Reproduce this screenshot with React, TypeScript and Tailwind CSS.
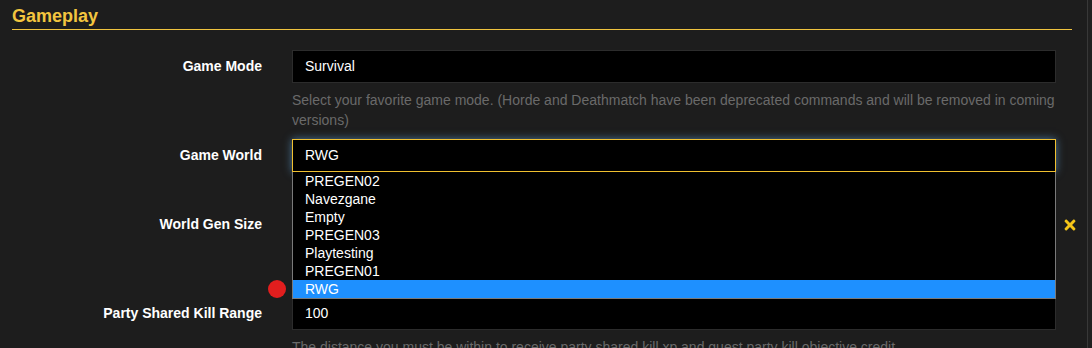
import React from "react";
import { FaTimes } from "react-icons/fa";

const options = ["PREGEN02", "Navezgane", "Empty", "PREGEN03", "Playtesting", "PREGEN01", "RWG"];

function Row({
  label,
  value,
  help,
  focused,
  icon,
  children,
}: {
  label: string;
  value: string;
  help: React.ReactNode;
  focused?: boolean;
  icon?: boolean;
  children?: React.ReactNode;
}) {
  return (
    <div className="flex items-start mb-[9px]">
      <div className="w-[250px] h-[33px] flex items-center justify-end font-bold text-white text-[14px]">
        {label}
      </div>
      <div className="ml-[30px] w-[764px] relative">
        <div
          className={
            focused
              ? "h-[33px] bg-black border border-[#f0c030] shadow-[0_0_8px_rgba(102,175,233,0.6)] pl-3 flex items-center text-white text-[14px]"
              : "h-[33px] bg-black border border-[#2c2c2c] pl-3 flex items-center text-white text-[14px]"
          }
        >
          {value}
        </div>
        <p className="mt-[7px] leading-[20px] text-[14px] text-[#6a6a6a]">{help}</p>
        {children}
      </div>
      {icon ? (
        <div className="h-[33px] flex items-center ml-[6px] text-[#f5c518]">
          <FaTimes size={16} />
        </div>
      ) : null}
    </div>
  );
}

export default function App() {
  return (
    <div
      className="h-[348px] w-[1092px] overflow-hidden bg-[#1d1d1d] flex"
      style={{ fontFamily: '"Liberation Sans", Arial, sans-serif' }}
    >
      <div className="w-[1087px] shrink-0">
        <div className="ml-3 mr-[15px]">
          <h2 className="pt-[4px] pb-[1px] leading-[24px] text-[18px] font-bold text-[#f3c53f] border-b border-[#f0c43f]">
            Gameplay
          </h2>
        </div>
        <div className="mt-[20px] ml-3">
          <Row
            label="Game Mode"
            value="Survival"
            help="Select your favorite game mode. (Horde and Deathmatch have been deprecated commands and will be removed in coming versions)"
          />
          <Row
            label="Game World"
            value="RWG"
            focused
            help="Select the world you want to play on."
          >
            <div className="absolute left-0 top-[33px] w-full z-10 bg-black border-x border-b border-[#7a7a7a] text-white text-[14px]">
              {options.map((o) => (
                <div
                  key={o}
                  className={
                    o === "RWG"
                      ? "h-[18px] leading-[18px] pl-3 bg-[#1e90ff]"
                      : "h-[18px] leading-[18px] pl-3"
                  }
                >
                  {o}
                </div>
              ))}
            </div>
            <div className="absolute left-[-24px] top-[141px] w-[18px] h-[18px] rounded-full bg-[#e21e1e] z-20" />
          </Row>
          <Row
            label="World Gen Size"
            value="4096"
            icon
            help="Size of the generated world in blocks. Only applies to random generated worlds (RWG). Larger sizes take considerably longer to generate and need more memory on the server."
          />
          <Row
            label="Party Shared Kill Range"
            value="100"
            help="The distance you must be within to receive party shared kill xp and quest party kill objective credit."
          />
        </div>
      </div>
      <div className="w-px bg-[#383838]" />
      <div className="flex-1 bg-[#202020]" />
    </div>
  );
}
